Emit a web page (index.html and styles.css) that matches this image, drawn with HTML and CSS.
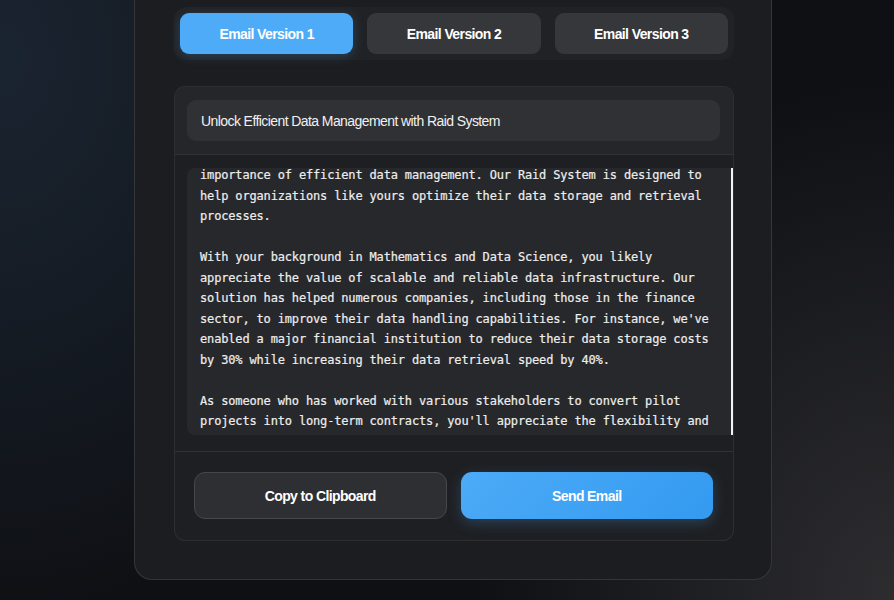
FILE: index.html
```html
<!DOCTYPE html>
<html lang="en">
<head>
<meta charset="utf-8">
<title>Email Versions</title>
<link rel="stylesheet" href="styles.css">
</head>
<body>
<div class="panel">
  <div class="tabs">
    <button class="tab active">Email Version 1</button>
    <button class="tab">Email Version 2</button>
    <button class="tab">Email Version 3</button>
  </div>
  <div class="email-card">
    <div class="email-head">
      <div class="subject">Unlock Efficient Data Management with Raid System</div>
    </div>
    <div class="email-body">
      <div class="body-box">
<pre class="body-text">importance of efficient data management. Our Raid System is designed to
help organizations like yours optimize their data storage and retrieval
processes.

With your background in Mathematics and Data Science, you likely
appreciate the value of scalable and reliable data infrastructure. Our
solution has helped numerous companies, including those in the finance
sector, to improve their data handling capabilities. For instance, we've
enabled a major financial institution to reduce their data storage costs
by 30% while increasing their data retrieval speed by 40%.

As someone who has worked with various stakeholders to convert pilot
projects into long-term contracts, you'll appreciate the flexibility and</pre>
      </div>
    </div>
    <div class="email-foot">
      <button class="btn btn-copy">Copy to Clipboard</button>
      <button class="btn btn-send">Send Email</button>
    </div>
  </div>
</div>
</body>
</html>
```

FILE: styles.css
```css
html, body {
  margin: 0;
  height: 100%;
}
body {
  width: 894px;
  height: 600px;
  overflow: hidden;
  font-family: "Liberation Sans", Arial, sans-serif;
  background:
    radial-gradient(ellipse 420px 520px at 100% 100%, #2d2d30 0%, rgba(45,45,48,0.6) 40%, rgba(20,20,24,0) 100%),
    radial-gradient(ellipse 420px 560px at 0% 10%, #1a2430 0%, rgba(24,33,44,0.7) 45%, rgba(15,16,20,0) 100%),
    #0f1014;
}
.panel {
  box-sizing: border-box;
  width: 638px;
  height: 580px;
  margin-left: 134px;
  padding: 7px 37px 0 39px;
  background: #1c1d20;
  border: 1px solid rgba(255,255,255,0.11);
  border-top: none;
  border-radius: 0 0 18px 18px;
}
.tabs {
  display: grid;
  grid-template-columns: repeat(3, 1fr);
  gap: 14px;
  padding: 6px;
  height: 53px;
  box-sizing: border-box;
  background: #212225;
  border-radius: 12px;
}
.tab {
  border: none;
  height: 41px;
  border-radius: 9px;
  background: #36373b;
  color: #ffffff;
  font-family: "Liberation Sans", Arial, sans-serif;
  font-weight: 700;
  font-size: 14px;
  letter-spacing: -0.6px;
  padding: 0;
}
.tab.active {
  background: #4dabf7;
  box-shadow: 0 2px 12px rgba(77,171,247,0.25);
}
.email-card {
  margin-top: 26px;
  height: 455px;
  box-sizing: border-box;
  border: 1px solid rgba(255,255,255,0.07);
  border-radius: 11px;
  background: #1e1f22;
  display: flex;
  flex-direction: column;
  overflow: hidden;
}
.email-head {
  background: #252629;
  padding: 13px 13px 13px 12px;
  border-bottom: 1px solid #313236;
}
.subject {
  height: 41px;
  box-sizing: border-box;
  background: #303134;
  border-radius: 9px;
  padding: 0 14px;
  display: flex;
  align-items: center;
  color: #f0f0f0;
  font-size: 14px;
  letter-spacing: -0.58px;
}
.email-body {
  padding: 13px 0 16px 12px;
  border-bottom: 1px solid #313236;
}
.body-box {
  height: 267px;
  overflow: hidden;
  background: #27282b;
  border-radius: 8px 0 0 8px;
  border-right: 2px solid #f2f2f2;
  padding-left: 13px;
}
.body-text {
  margin: -3px 0 0 0;
  font-family: "DejaVu Sans Mono", "Liberation Mono", monospace;
  font-size: 12px;
  letter-spacing: -0.16px;
  line-height: 20.5px;
  color: #f0f0f0;
  -webkit-text-stroke: 0.2px #e8e8e8;
  white-space: pre;
}
.email-foot {
  flex: 1;
  display: grid;
  grid-template-columns: 1fr 1fr;
  gap: 14px;
  padding: 20px 20px 20px 19px;
  align-items: start;
}
.btn {
  height: 47px;
  border-radius: 11px;
  font-family: "Liberation Sans", Arial, sans-serif;
  font-weight: 700;
  font-size: 14px;
  letter-spacing: -0.6px;
  color: #ffffff;
  padding: 0;
}
.btn-copy {
  background: #2e2f32;
  border: 1px solid #46474b;
}
.btn-send {
  border: none;
  background: linear-gradient(135deg, #4dabf7 0%, #339af0 100%);
  box-shadow: 0 4px 14px rgba(77,171,247,0.25);
}
```
